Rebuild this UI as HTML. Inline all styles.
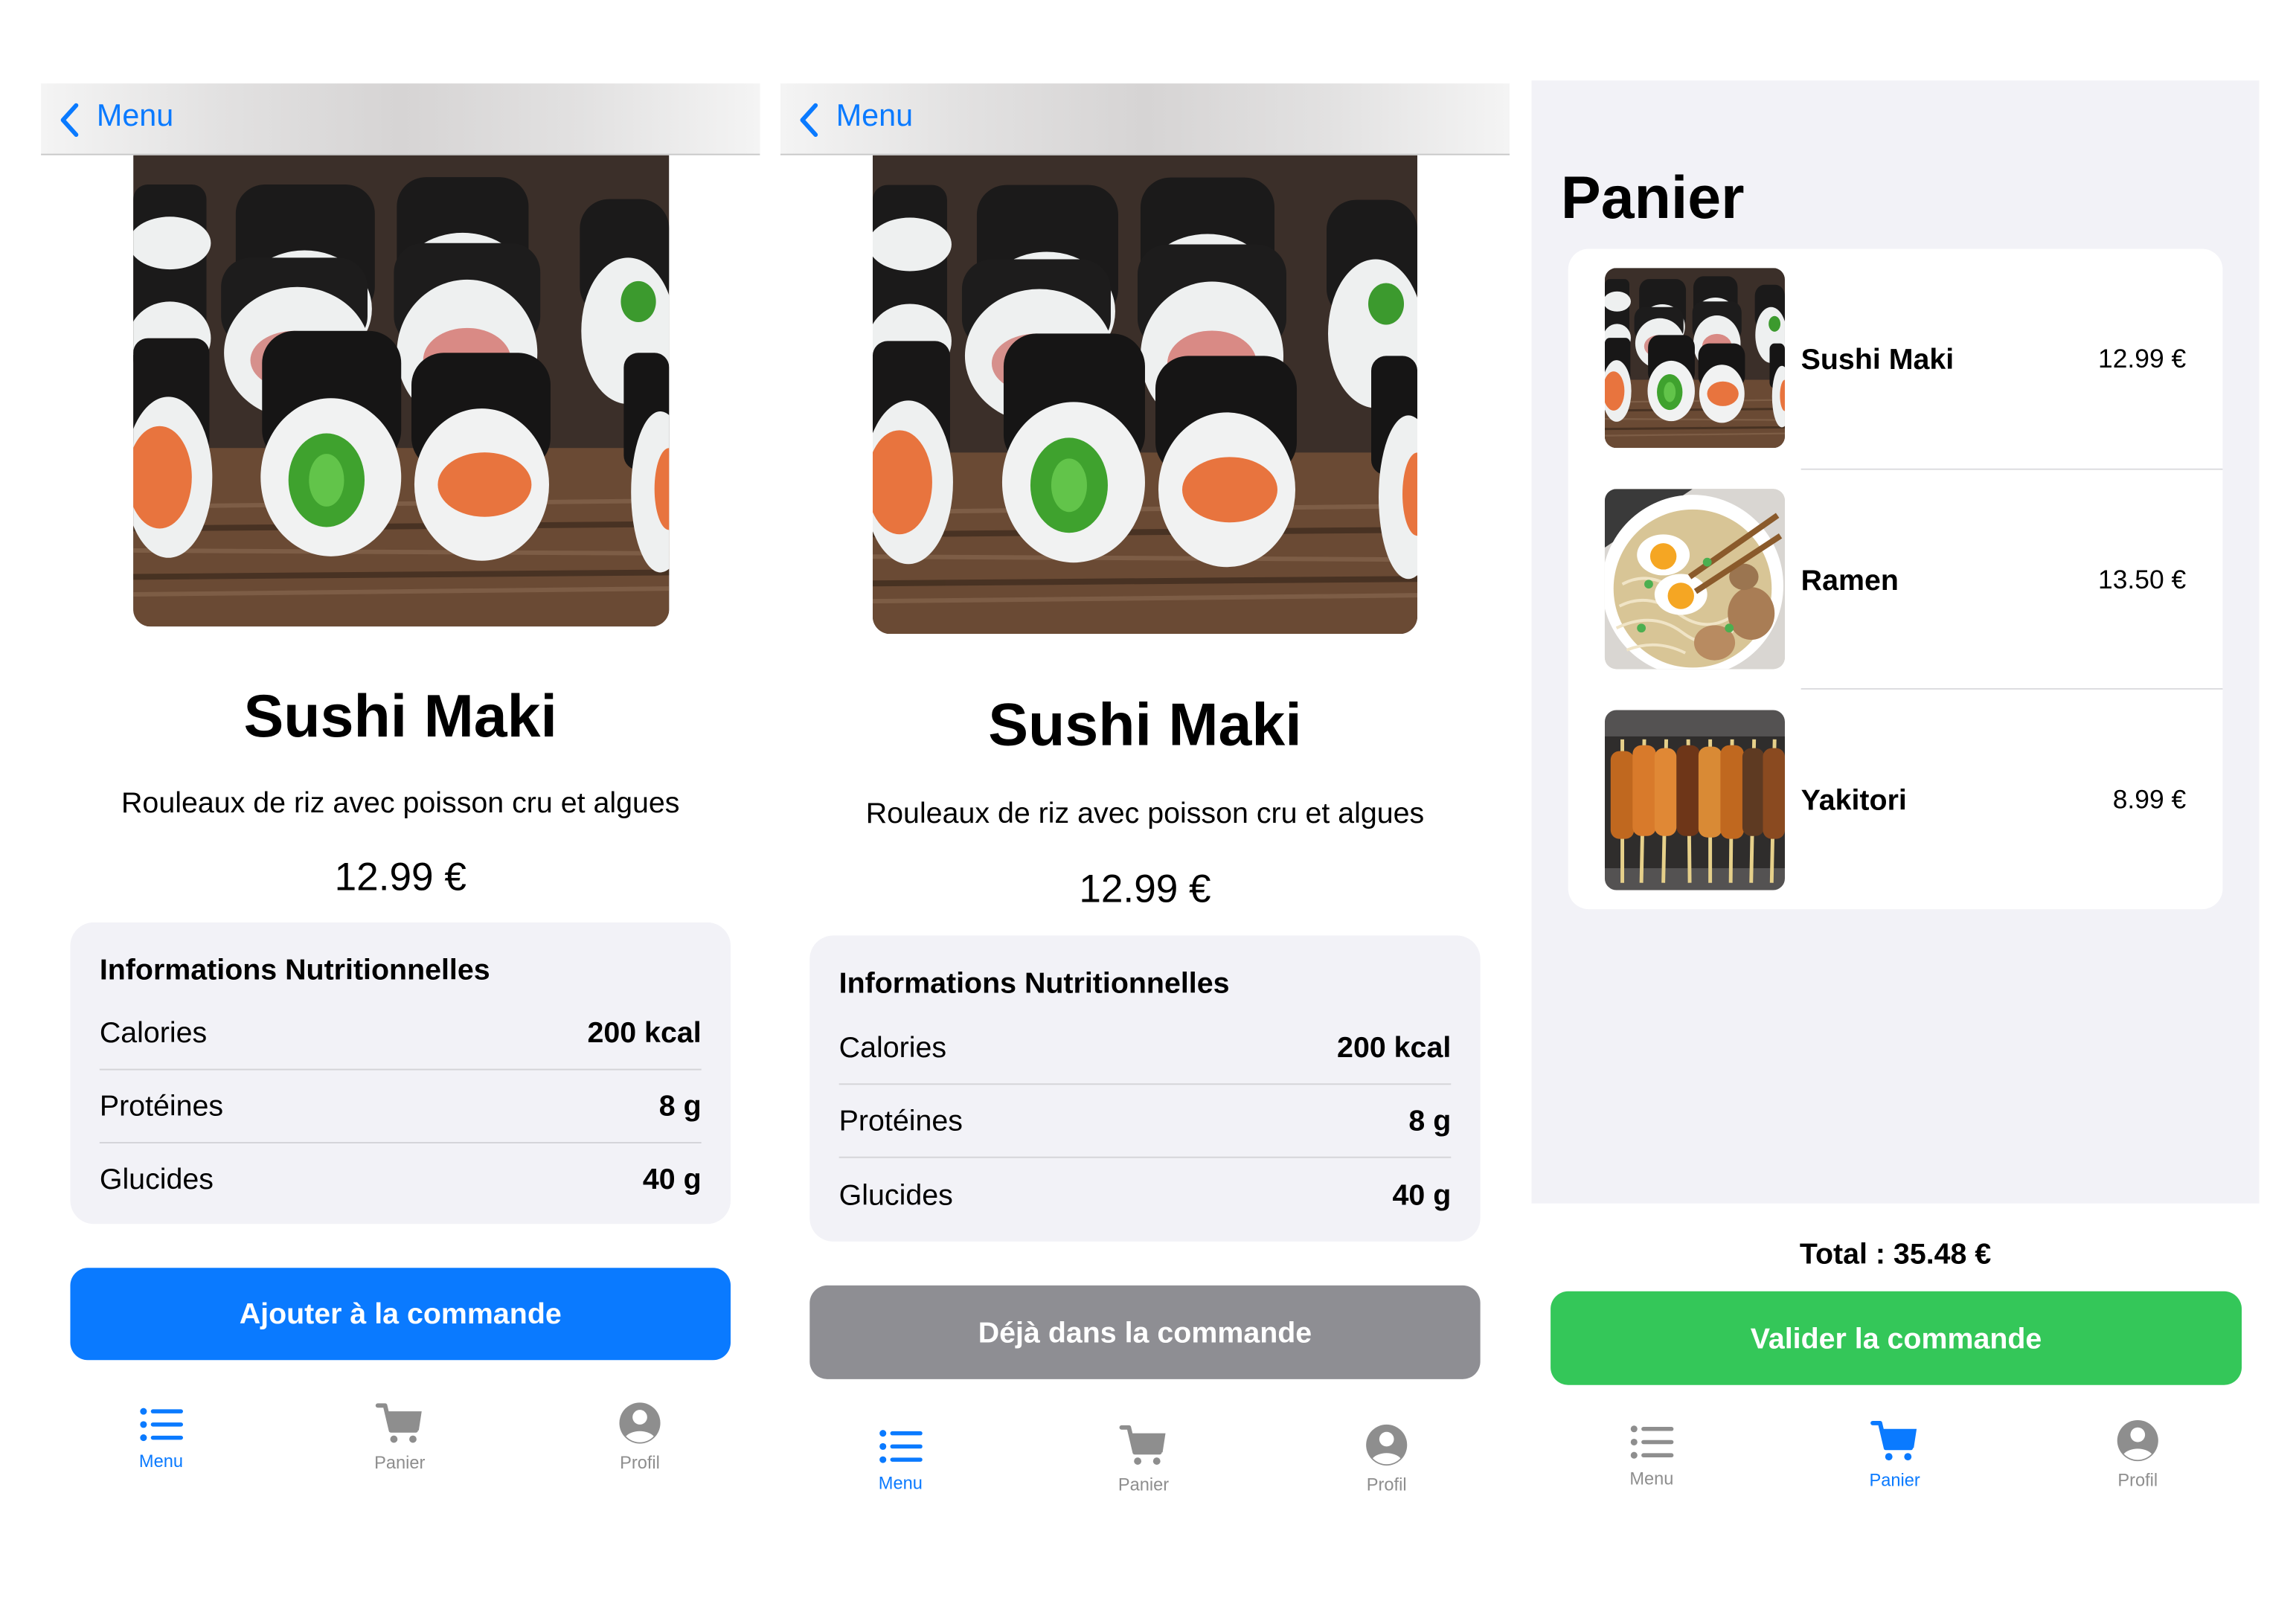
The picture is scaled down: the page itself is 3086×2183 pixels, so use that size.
<!DOCTYPE html>
<html><head><meta charset="utf-8">
<style>
*{margin:0;padding:0;box-sizing:border-box}
html,body{width:3086px;height:2182px;background:#fff;overflow:hidden}
#w{position:absolute;left:0;top:0;width:1568px;height:1109px;transform:scale(1.968);transform-origin:0 0;font-family:"Liberation Sans",sans-serif;color:#000}
.a{position:absolute}
.nav{position:absolute;height:49px;background:linear-gradient(90deg,#f4f4f4 0%,#e2e1e1 25%,#d6d4d4 50%,#e2e1e1 75%,#f4f4f4 100%);border-bottom:1px solid #c8c8c8}
.nav span{position:absolute;left:38px;top:11px;font-size:21px;color:#0a7aff}
.nav svg{position:absolute;left:10px;top:12px}
.img{position:absolute;overflow:hidden}
.c{text-align:center;position:absolute}
.box{position:absolute;background:#f2f2f7;border-radius:16px}
.box .h{position:absolute;left:20px;font-size:20px;font-weight:bold}
.row{position:absolute;left:20px;right:20px;font-size:20px}
.row b{position:absolute;right:0;top:0}
.sep{position:absolute;left:20px;right:20px;height:1px;background:#d4d4d8}
.btn{position:absolute;border-radius:12px;color:#fff;font-size:20px;font-weight:bold;text-align:center}
.tab{position:absolute;width:60px;text-align:center;font-size:12px;color:#8e8e8e}
.tab svg{display:block;margin:0 auto 5px}
.bl{color:#0a7aff}
</style></head><body><div id="w">
<svg width="0" height="0" style="position:absolute">
<defs>
<symbol id="sushi" viewBox="0 0 366 322" preserveAspectRatio="none">
<rect width="366" height="322" fill="#3b2f29"/>
<rect y="200" width="366" height="122" fill="#6a4a34"/>
<g stroke="#8a6b52" stroke-width="3" opacity=".6"><line x1="0" y1="240" x2="366" y2="236"/><line x1="0" y1="270" x2="366" y2="272"/><line x1="0" y1="300" x2="366" y2="296"/></g>
<g stroke="#3a281c" stroke-width="4" opacity=".7"><line x1="0" y1="255" x2="366" y2="252"/><line x1="0" y1="288" x2="366" y2="285"/></g>
<rect x="70" y="20" width="95" height="90" rx="20" fill="#1b1a1a"/><ellipse cx="117" cy="105" rx="46" ry="40" fill="#eef0f0"/><ellipse cx="117" cy="108" rx="20" ry="12" fill="#e57a45"/>
<rect x="180" y="15" width="90" height="80" rx="20" fill="#1b1a1a"/><ellipse cx="225" cy="85" rx="42" ry="32" fill="#eef0f0"/>
<rect x="178" y="60" width="100" height="70" rx="20" fill="#1d1c1c"/><ellipse cx="228" cy="135" rx="48" ry="50" fill="#eef0f0"/><ellipse cx="228" cy="140" rx="30" ry="22" fill="#d98a85"/>
<rect x="60" y="70" width="100" height="60" rx="20" fill="#1d1c1c"/><ellipse cx="112" cy="135" rx="50" ry="45" fill="#eef0f0"/><ellipse cx="110" cy="140" rx="30" ry="20" fill="#d6908c"/>
<rect x="305" y="30" width="61" height="80" rx="20" fill="#1b1a1a"/><ellipse cx="338" cy="120" rx="32" ry="50" fill="#eef0f0"/><ellipse cx="345" cy="100" rx="12" ry="14" fill="#3c9a2e"/>
<rect x="0" y="20" width="50" height="130" rx="10" fill="#1b1a1a"/><ellipse cx="25" cy="60" rx="28" ry="18" fill="#eef0f0"/><ellipse cx="25" cy="125" rx="28" ry="25" fill="#eef0f0"/>
<rect x="0" y="125" width="52" height="80" rx="10" fill="#181717"/><ellipse cx="24" cy="220" rx="30" ry="55" fill="#eef0f0"/><ellipse cx="18" cy="220" rx="22" ry="35" fill="#e8743e"/>
<rect x="88" y="120" width="95" height="90" rx="22" fill="#161515"/><ellipse cx="135" cy="220" rx="48" ry="54" fill="#f1f2f2"/><ellipse cx="132" cy="222" rx="26" ry="32" fill="#3fa22e"/><ellipse cx="132" cy="222" rx="12" ry="18" fill="#62c44a"/>
<rect x="190" y="135" width="95" height="80" rx="22" fill="#161515"/><ellipse cx="238" cy="225" rx="46" ry="52" fill="#f1f2f2"/><ellipse cx="240" cy="225" rx="32" ry="22" fill="#e8743e"/>
<rect x="335" y="135" width="31" height="80" rx="10" fill="#161515"/><ellipse cx="360" cy="230" rx="20" ry="55" fill="#eef0f0"/><ellipse cx="366" cy="228" rx="10" ry="28" fill="#e8743e"/>
</symbol>
</defs></svg>

<!-- PANEL 1 -->
<div class="nav" style="left:28px;top:57px;width:491px"><svg width="18" height="26" viewBox="0 0 18 26"><path d="M14 3L5 13l9 10" fill="none" stroke="#0a7aff" stroke-width="3" stroke-linecap="round" stroke-linejoin="round"/></svg><span>Menu</span></div>
<div class="img" style="left:91px;top:106px;width:366px;height:322px;border-radius:0 0 12px 12px"><svg width="366" height="322"><use href="#sushi"/></svg></div>
<div class="c" style="left:28px;width:491px;top:466px;font-size:41px;font-weight:bold">Sushi Maki</div>
<div class="c" style="left:28px;width:491px;top:538px;font-size:20px">Rouleaux de riz avec poisson cru et algues</div>
<div class="c" style="left:28px;width:491px;top:584px;font-size:27px">12.99 €</div>
<div class="box" style="left:48px;top:630px;width:451px;height:206px">
<div class="h" style="top:22px">Informations Nutritionnelles</div>
<div class="row" style="top:65px">Calories<b>200 kcal</b></div>
<div class="sep" style="top:100px"></div>
<div class="row" style="top:115px">Protéines<b>8 g</b></div>
<div class="sep" style="top:150px"></div>
<div class="row" style="top:165px">Glucides<b>40 g</b></div>
</div>
<div class="btn" style="left:48px;top:866px;width:451px;height:63px;line-height:65px;background:#0a7aff">Ajouter à la commande</div>

<!-- PANEL 2 -->
<div class="nav" style="left:533px;top:57px;width:498px"><svg width="18" height="26" viewBox="0 0 18 26"><path d="M14 3L5 13l9 10" fill="none" stroke="#0a7aff" stroke-width="3" stroke-linecap="round" stroke-linejoin="round"/></svg><span>Menu</span></div>
<div class="img" style="left:596px;top:106px;width:372px;height:327px;border-radius:0 0 12px 12px"><svg width="372" height="327"><use href="#sushi"/></svg></div>
<div class="c" style="left:533px;width:498px;top:472px;font-size:41px;font-weight:bold">Sushi Maki</div>
<div class="c" style="left:533px;width:498px;top:545px;font-size:20px">Rouleaux de riz avec poisson cru et algues</div>
<div class="c" style="left:533px;width:498px;top:592px;font-size:27px">12.99 €</div>
<div class="box" style="left:553px;top:639px;width:458px;height:209px">
<div class="h" style="top:22px">Informations Nutritionnelles</div>
<div class="row" style="top:66px">Calories<b>200 kcal</b></div>
<div class="sep" style="top:101px"></div>
<div class="row" style="top:116px">Protéines<b>8 g</b></div>
<div class="sep" style="top:151px"></div>
<div class="row" style="top:167px">Glucides<b>40 g</b></div>
</div>
<div class="btn" style="left:553px;top:878px;width:458px;height:64px;line-height:66px;background:#8e8e93">Déjà dans la commande</div>

<!-- PANEL 3 -->
<div class="a" style="left:1046px;top:55px;width:497px;height:767px;background:#f2f2f7"></div>
<div class="a" style="left:1066px;top:112px;font-size:41px;font-weight:bold">Panier</div>
<div class="a" style="left:1071px;top:170px;width:447px;height:451px;background:#fff;border-radius:14px"></div>
<div class="img" style="left:1096px;top:183px;width:123px;height:123px;border-radius:8px"><svg width="123" height="123"><use href="#sushi"/></svg></div>
<div class="img" style="left:1096px;top:334px;width:123px;height:123px;border-radius:8px;background:#c9c4bb">
<svg width="123" height="123" viewBox="0 0 123 123"><rect width="123" height="123" fill="#d9d6d2"/><path d="M0 0h60L0 40z" fill="#3a3a3a"/><circle cx="60" cy="66" r="62" fill="#fff"/><circle cx="60" cy="68" r="54" fill="#d8c596"/>
<g stroke="#f0e4c6" stroke-width="2" fill="none"><path d="M10 80q20-10 40 5t40 0"/><path d="M8 95q25-12 45 3t35-2"/><path d="M15 110q20-8 40 2"/><path d="M12 65q15-8 30 0"/></g>
<ellipse cx="100" cy="85" rx="16" ry="18" fill="#a97d55"/><ellipse cx="75" cy="105" rx="14" ry="12" fill="#b88b61"/><ellipse cx="95" cy="60" rx="10" ry="9" fill="#9b7550"/>
<ellipse cx="40" cy="45" rx="18" ry="14" fill="#fff"/><circle cx="40" cy="46" r="9" fill="#f5a623"/><ellipse cx="52" cy="72" rx="18" ry="14" fill="#fff"/><circle cx="52" cy="73" r="9" fill="#f5a623"/>
<path d="M58 60L118 18M62 70L120 32" stroke="#8a5a2b" stroke-width="4"/><g fill="#4caf50"><circle cx="30" cy="65" r="3"/><circle cx="70" cy="50" r="3"/><circle cx="85" cy="95" r="3"/><circle cx="25" cy="95" r="3"/></g></svg></div>
<div class="img" style="left:1096px;top:485px;width:123px;height:123px;border-radius:8px">
<svg width="123" height="123" viewBox="0 0 123 123"><rect width="123" height="123" fill="#545252"/><rect x="0" y="18" width="123" height="90" fill="#2f2d2c"/>
<g stroke="#e6d08a" stroke-width="2.5"><line x1="12" y1="20" x2="12" y2="118"/><line x1="27" y1="20" x2="25" y2="118"/><line x1="42" y1="20" x2="40" y2="118"/><line x1="57" y1="20" x2="58" y2="118"/><line x1="72" y1="20" x2="72" y2="118"/><line x1="87" y1="20" x2="86" y2="118"/><line x1="102" y1="20" x2="100" y2="118"/><line x1="116" y1="20" x2="114" y2="118"/></g>
<g fill="#c0681f"><rect x="4" y="28" width="16" height="60" rx="6"/><rect x="19" y="24" width="16" height="62" rx="6" fill="#d87a2b"/><rect x="34" y="26" width="15" height="60" rx="6" fill="#e08835"/><rect x="49" y="24" width="16" height="62" rx="6" fill="#6e3618"/><rect x="64" y="25" width="16" height="62" rx="6" fill="#d98a35"/><rect x="79" y="24" width="16" height="64" rx="6"/><rect x="94" y="26" width="15" height="60" rx="6" fill="#5e3a22"/><rect x="108" y="26" width="15" height="62" rx="6" fill="#8a4a20"/></g></svg></div>
<div class="a" style="left:1230px;top:235px;font-size:20px;font-weight:bold">Sushi Maki</div>
<div class="a" style="left:1380px;width:113px;text-align:right;top:235px;font-size:18px">12.99 €</div>
<div class="a" style="left:1230px;top:320px;width:288px;height:1px;background:#dcdcdf"></div>
<div class="a" style="left:1230px;top:386px;font-size:20px;font-weight:bold">Ramen</div>
<div class="a" style="left:1380px;width:113px;text-align:right;top:386px;font-size:18px">13.50 €</div>
<div class="a" style="left:1230px;top:470px;width:288px;height:1px;background:#dcdcdf"></div>
<div class="a" style="left:1230px;top:536px;font-size:20px;font-weight:bold">Yakitori</div>
<div class="a" style="left:1380px;width:113px;text-align:right;top:536px;font-size:18px">8.99 €</div>
<div class="c" style="left:1046px;width:497px;top:846px;font-size:20px;font-weight:bold">Total : 35.48 €</div>
<div class="btn" style="left:1059px;top:882px;width:472px;height:64px;line-height:66px;background:#34c759">Valider la commande</div>

<svg width="0" height="0" style="position:absolute"><defs>
<symbol id="list" viewBox="0 0 30 26"><g fill="currentColor"><circle cx="3" cy="4" r="2.3"/><circle cx="3" cy="13" r="2.3"/><circle cx="3" cy="22" r="2.3"/><rect x="8" y="2.6" width="22" height="2.8" rx="1.4"/><rect x="8" y="11.6" width="22" height="2.8" rx="1.4"/><rect x="8" y="20.6" width="22" height="2.8" rx="1.4"/></g></symbol>
<symbol id="cart" viewBox="0 0 34 30"><path d="M2 3h5l4 17h17" fill="none" stroke="currentColor" stroke-width="3" stroke-linecap="round" stroke-linejoin="round"/><path d="M8 7h24l-2 13H11z" fill="currentColor"/><circle cx="13" cy="26" r="2.5" fill="currentColor"/><circle cx="26" cy="26" r="2.5" fill="currentColor"/></symbol>
<symbol id="prof" viewBox="0 0 30 30"><circle cx="15" cy="15" r="14" fill="currentColor"/><circle cx="15" cy="11" r="5" fill="#fff"/><path d="M5.5 24a11 7 0 0 1 19 0a13 13 0 0 1-19 0z" fill="#fff"/></symbol>
</defs></svg>
<div class="tab bl" style="left:80px;top:960px"><svg width="30" height="26"><use href="#list"/></svg>Menu</div>
<div class="tab" style="left:243px;top:957px"><svg width="34" height="30"><use href="#cart"/></svg>Panier</div>
<div class="tab" style="left:407px;top:957px"><svg width="30" height="30"><use href="#prof"/></svg>Profil</div>

<div class="tab bl" style="left:585px;top:975px"><svg width="30" height="26"><use href="#list"/></svg>Menu</div>
<div class="tab" style="left:751px;top:972px"><svg width="34" height="30"><use href="#cart"/></svg>Panier</div>
<div class="tab" style="left:917px;top:972px"><svg width="30" height="30"><use href="#prof"/></svg>Profil</div>

<div class="tab" style="left:1098px;top:972px"><svg width="30" height="26"><use href="#list"/></svg>Menu</div>
<div class="tab bl" style="left:1264px;top:969px"><svg width="34" height="30"><use href="#cart"/></svg>Panier</div>
<div class="tab" style="left:1430px;top:969px"><svg width="30" height="30"><use href="#prof"/></svg>Profil</div>
</div></body></html>
